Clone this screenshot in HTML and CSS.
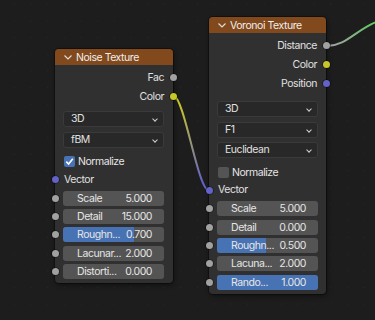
FILE: index.html
```html
<!DOCTYPE html>
<html lang="en">
<head>
  <meta charset="UTF-8">
  <title>Shader Nodes</title>
  <link rel="stylesheet" href="styles.css">
</head>
<body>

<div class="editor">

  <!-- Node links -->
  <svg class="links" width="375" height="320" viewBox="0 0 375 320">
    <defs>
      <linearGradient id="linkColor" gradientUnits="userSpaceOnUse" x1="174" y1="96" x2="209" y2="190">
        <stop offset="0.1" stop-color="#c7c729"/>
        <stop offset="0.9" stop-color="#6363c7"/>
      </linearGradient>
      <linearGradient id="linkDist" gradientUnits="userSpaceOnUse" x1="327" y1="46" x2="378" y2="22">
        <stop offset="0.1" stop-color="#a1a1a1"/>
        <stop offset="0.9" stop-color="#63c763"/>
      </linearGradient>
    </defs>
    <path d="M173.5 96 C184 96 198 190 208.5 190" fill="none" stroke="url(#linkColor)" stroke-width="2"/>
    <path d="M327 46 C350 46 360 22 392 18" fill="none" stroke="url(#linkDist)" stroke-width="2"/>
  </svg>

  <!-- Noise Texture -->
  <div class="node noise">
    <div class="node-head">
      <svg class="chev" width="8" height="5" viewBox="0 0 8 5"><polyline points="0.5,0.5 4,4 7.5,0.5" fill="none" stroke="#e0e0e0" stroke-width="1.1"/></svg>
      Noise Texture
    </div>
    <div class="node-body">
      <div class="out-row">Fac<span class="socket grey"></span></div>
      <div class="out-row">Color<span class="socket yellow"></span></div>

      <div class="menus">
        <div class="menu">3D<span class="caret"></span></div>
        <div class="menu">fBM<span class="caret"></span></div>
      </div>

      <div class="check-row"><span class="box checked"></span>Normalize</div>
      <div class="in-row">Vector<span class="socket blue"></span></div>

      <div class="sliders">
        <div class="slider-row"><span class="socket grey"></span><div class="slider"><span>Scale</span><span>5.000</span></div></div>
        <div class="slider-row"><span class="socket grey"></span><div class="slider"><span>Detail</span><span>15.000</span></div></div>
        <div class="slider-row"><span class="socket grey"></span><div class="slider"><span class="fill" style="width: 70%"></span><span>Roughn...</span><span>0.700</span></div></div>
        <div class="slider-row"><span class="socket grey"></span><div class="slider"><span>Lacunar...</span><span>2.000</span></div></div>
        <div class="slider-row"><span class="socket grey"></span><div class="slider"><span>Distorti...</span><span>0.000</span></div></div>
      </div>
    </div>
  </div>

  <!-- Voronoi Texture -->
  <div class="node voronoi">
    <div class="node-head">
      <svg class="chev" width="8" height="5" viewBox="0 0 8 5"><polyline points="0.5,0.5 4,4 7.5,0.5" fill="none" stroke="#e0e0e0" stroke-width="1.1"/></svg>
      Voronoi Texture
    </div>
    <div class="node-body">
      <div class="out-row">Distance<span class="socket grey"></span></div>
      <div class="out-row">Color<span class="socket yellow"></span></div>
      <div class="out-row">Position<span class="socket blue"></span></div>

      <div class="menus">
        <div class="menu">3D<span class="caret"></span></div>
        <div class="menu">F1<span class="caret"></span></div>
        <div class="menu">Euclidean<span class="caret"></span></div>
      </div>

      <div class="check-row"><span class="box"></span>Normalize</div>
      <div class="in-row">Vector<span class="socket blue"></span></div>

      <div class="sliders">
        <div class="slider-row"><span class="socket grey"></span><div class="slider"><span>Scale</span><span>5.000</span></div></div>
        <div class="slider-row"><span class="socket grey"></span><div class="slider"><span>Detail</span><span>0.000</span></div></div>
        <div class="slider-row"><span class="socket grey"></span><div class="slider"><span class="fill" style="width: 49%"></span><span>Roughn...</span><span>0.500</span></div></div>
        <div class="slider-row"><span class="socket grey"></span><div class="slider"><span>Lacuna...</span><span>2.000</span></div></div>
        <div class="slider-row"><span class="socket grey"></span><div class="slider"><span class="fill" style="width: 100%"></span><span>Rando...</span><span>1.000</span></div></div>
      </div>
    </div>
  </div>

</div>

</body>
</html>
```

FILE: styles.css
```css
body {
  margin: 0;
  background-color: #1d1d1d;
  font-family: Inter, "DejaVu Sans", sans-serif;
  font-size: 10.5px;
  letter-spacing: -0.45px;
  color: #e6e6e6;
}

.editor {
  position: relative;
  width: 375px;
  height: 320px;
  overflow: hidden;
  background-color: #1d1d1d;
  background-image: radial-gradient(circle, #262626 0.8px, transparent 1px);
  background-size: 16.67px 16.67px;
  background-position: 6px -4px;
}

.links {
  position: absolute;
  left: 0;
  top: 0;
  z-index: 0;
}

/* nodes sit on the canvas at their own place */
.node {
  position: absolute;
  z-index: 1;
  background-color: #303030;
  border-radius: 4px;
  box-shadow: 0 0 0 1px rgba(0, 0, 0, 0.35), 1px 2px 5px rgba(0, 0, 0, 0.45);
}

.noise {
  left: 55px;
  top: 49px;
  width: 118px;
}

.voronoi {
  left: 209px;
  top: 17px;
  width: 117px;
}

.node-head {
  display: flex;
  align-items: center;
  gap: 4px;
  height: 16px;
  padding-left: 9px;
  background-color: #82491c;
  border-radius: 4px 4px 0 0;
  color: #eeeeee;
}

.chev {
  display: block;
  margin-top: 1px;
}

.node-body {
  padding: 3px 0 4.5px 0;
}

.out-row {
  position: relative;
  height: 19px;
  line-height: 19px;
  padding-right: 9px;
  text-align: right;
  color: #e0e0e0;
}

.out-row .socket {
  right: -3.5px;
  top: 6px;
}

.socket {
  position: absolute;
  width: 7px;
  height: 7px;
  border-radius: 50%;
  box-shadow: 0 0 0 0.6px rgba(0, 0, 0, 0.6);
}

.grey { background-color: #a1a1a1; }
.yellow { background-color: #c7c729; }
.blue { background-color: #6363c7; }

.menus {
  display: flex;
  flex-direction: column;
  gap: 4.7px;
  margin: 5px 9px 0 8px;
}

.voronoi .menus {
  margin-top: 8px;
  margin-right: 8px;
}

.menu {
  position: relative;
  height: 14px;
  line-height: 14px;
  padding-left: 7px;
  background-color: #282828;
  border: 1px solid #3a3a3a;
  border-radius: 3px;
  color: #e0e0e0;
}

.caret {
  position: absolute;
  right: 6px;
  top: 5px;
  width: 3px;
  height: 3px;
  border-right: 1px solid #d0d0d0;
  border-bottom: 1px solid #d0d0d0;
  transform: rotate(45deg);
}

.check-row {
  display: flex;
  align-items: center;
  gap: 3px;
  height: 20px;
  margin-top: 4px;
  padding-left: 9px;
}

.box {
  width: 11px;
  height: 11px;
  border-radius: 2px;
  background-color: #545454;
}

.box.checked {
  background-color: #4772b3;
  background-image: url("data:image/svg+xml,%3Csvg xmlns='http://www.w3.org/2000/svg' viewBox='0 0 11 11'%3E%3Cpolyline points='2.3,5.6 4.6,8 8.8,2.8' fill='none' stroke='white' stroke-width='1.6'/%3E%3C/svg%3E");
}

.in-row {
  position: relative;
  height: 16px;
  line-height: 16px;
  padding-left: 9px;
  color: #e0e0e0;
}

.in-row .socket {
  left: -3.5px;
  top: 4.5px;
}

.sliders {
  display: flex;
  flex-direction: column;
  gap: 3.3px;
  margin-top: 3px;
}

.slider-row {
  position: relative;
  padding: 0 9px 0 8px;
}

.voronoi .slider-row {
  padding-right: 8px;
}

.slider-row .socket {
  left: -3.5px;
  top: 4px;
}

.slider {
  position: relative;
  display: flex;
  justify-content: space-between;
  height: 15px;
  line-height: 15px;
  padding: 0 12px 0 14px;
  background-color: #545454;
  border-radius: 3px;
  overflow: hidden;
}

.slider span {
  position: relative;
}

.slider .fill {
  position: absolute;
  left: 0;
  top: 0;
  bottom: 0;
  background-color: #4772b3;
}
```
